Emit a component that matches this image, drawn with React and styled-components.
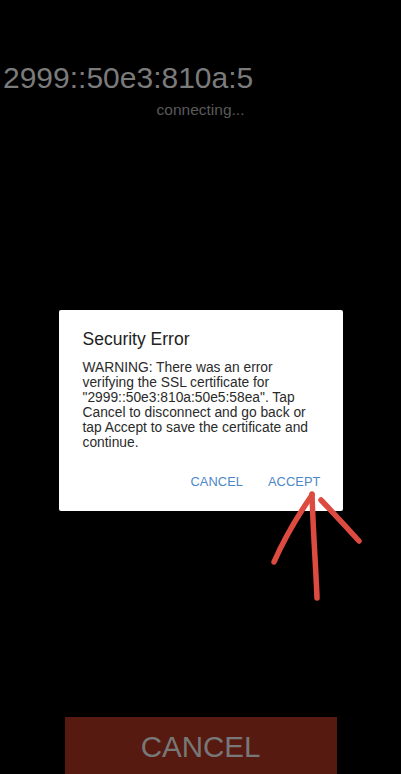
import React from "react";
import styled, { createGlobalStyle } from "styled-components";

const Global = createGlobalStyle`
  html, body { margin: 0; padding: 0; background: #000; }
  body { font-family: "Liberation Sans", Arial, sans-serif; }
`;

const Page = styled.div`
  position: relative;
  width: 401px;
  height: 774px;
  overflow: hidden;
  background: #000;
  display: flex;
  flex-direction: column;
  align-items: stretch;
`;

const Host = styled.div`
  margin-top: 62.6px;
  padding-left: 3px;
  font-size: 30px;
  line-height: 30px;
  color: #7b7b7b;
  white-space: nowrap;
`;

const Status = styled.div`
  margin-top: 9.4px;
  font-size: 15.5px;
  line-height: 16px;
  color: #5a5a5a;
  text-align: center;
`;

const Dialog = styled.div`
  margin: 192px auto 0;
  width: 284px;
  box-sizing: border-box;
  padding: 19px 22px 21.4px 24px;
  background: #fff;
  border-radius: 2px;
`;

const Title = styled.div`
  font-size: 17.5px;
  line-height: 20px;
  color: #222;
`;

const Message = styled.div`
  margin-top: 11px;
  font-size: 13.8px;
  line-height: 15px;
  color: #2b2b2b;
`;

const Actions = styled.div`
  margin-top: 23.6px;
  display: flex;
  justify-content: flex-end;
  gap: 25px;
`;

const ActionButton = styled.div`
  font-size: 12.8px;
  line-height: 16px;
  color: #4b87c9;
  letter-spacing: 0.1px;
`;

const BigCancel = styled.div`
  margin: auto auto 0;
  width: 272px;
  height: 57px;
  box-sizing: border-box;
  padding-top: 14.8px;
  background: #561a11;
  color: #787878;
  font-size: 29.5px;
  line-height: 30px;
  text-align: center;
`;

const Annotation = styled.svg`
  position: absolute;
  left: 0;
  top: 0;
  width: 401px;
  height: 774px;
  pointer-events: none;
`;

export default function App() {
  return (
    <Page>
      <Global />
      <Host>2999::50e3:810a:5</Host>
      <Status>connecting...</Status>
      <Dialog>
        <Title>Security Error</Title>
        <Message>
          WARNING: There was an error verifying the SSL certificate for
          "2999::50e3:810a:50e5:58ea". Tap Cancel to disconnect and go back or
          tap Accept to save the certificate and continue.
        </Message>
        <Actions>
          <ActionButton>CANCEL</ActionButton>
          <ActionButton>ACCEPT</ActionButton>
        </Actions>
      </Dialog>
      <BigCancel>CANCEL</BigCancel>
      <Annotation viewBox="0 0 401 774">
        <g fill="none" stroke="#dc4a40" strokeWidth="5.5" strokeLinecap="round" strokeLinejoin="round">
          <path d="M312 494 C 313 530, 316 570, 317 598" />
          <path d="M312 495 Q 288 530 274 562" />
          <path d="M321 500 Q 340 520 359 541" />
        </g>
      </Annotation>
    </Page>
  );
}
